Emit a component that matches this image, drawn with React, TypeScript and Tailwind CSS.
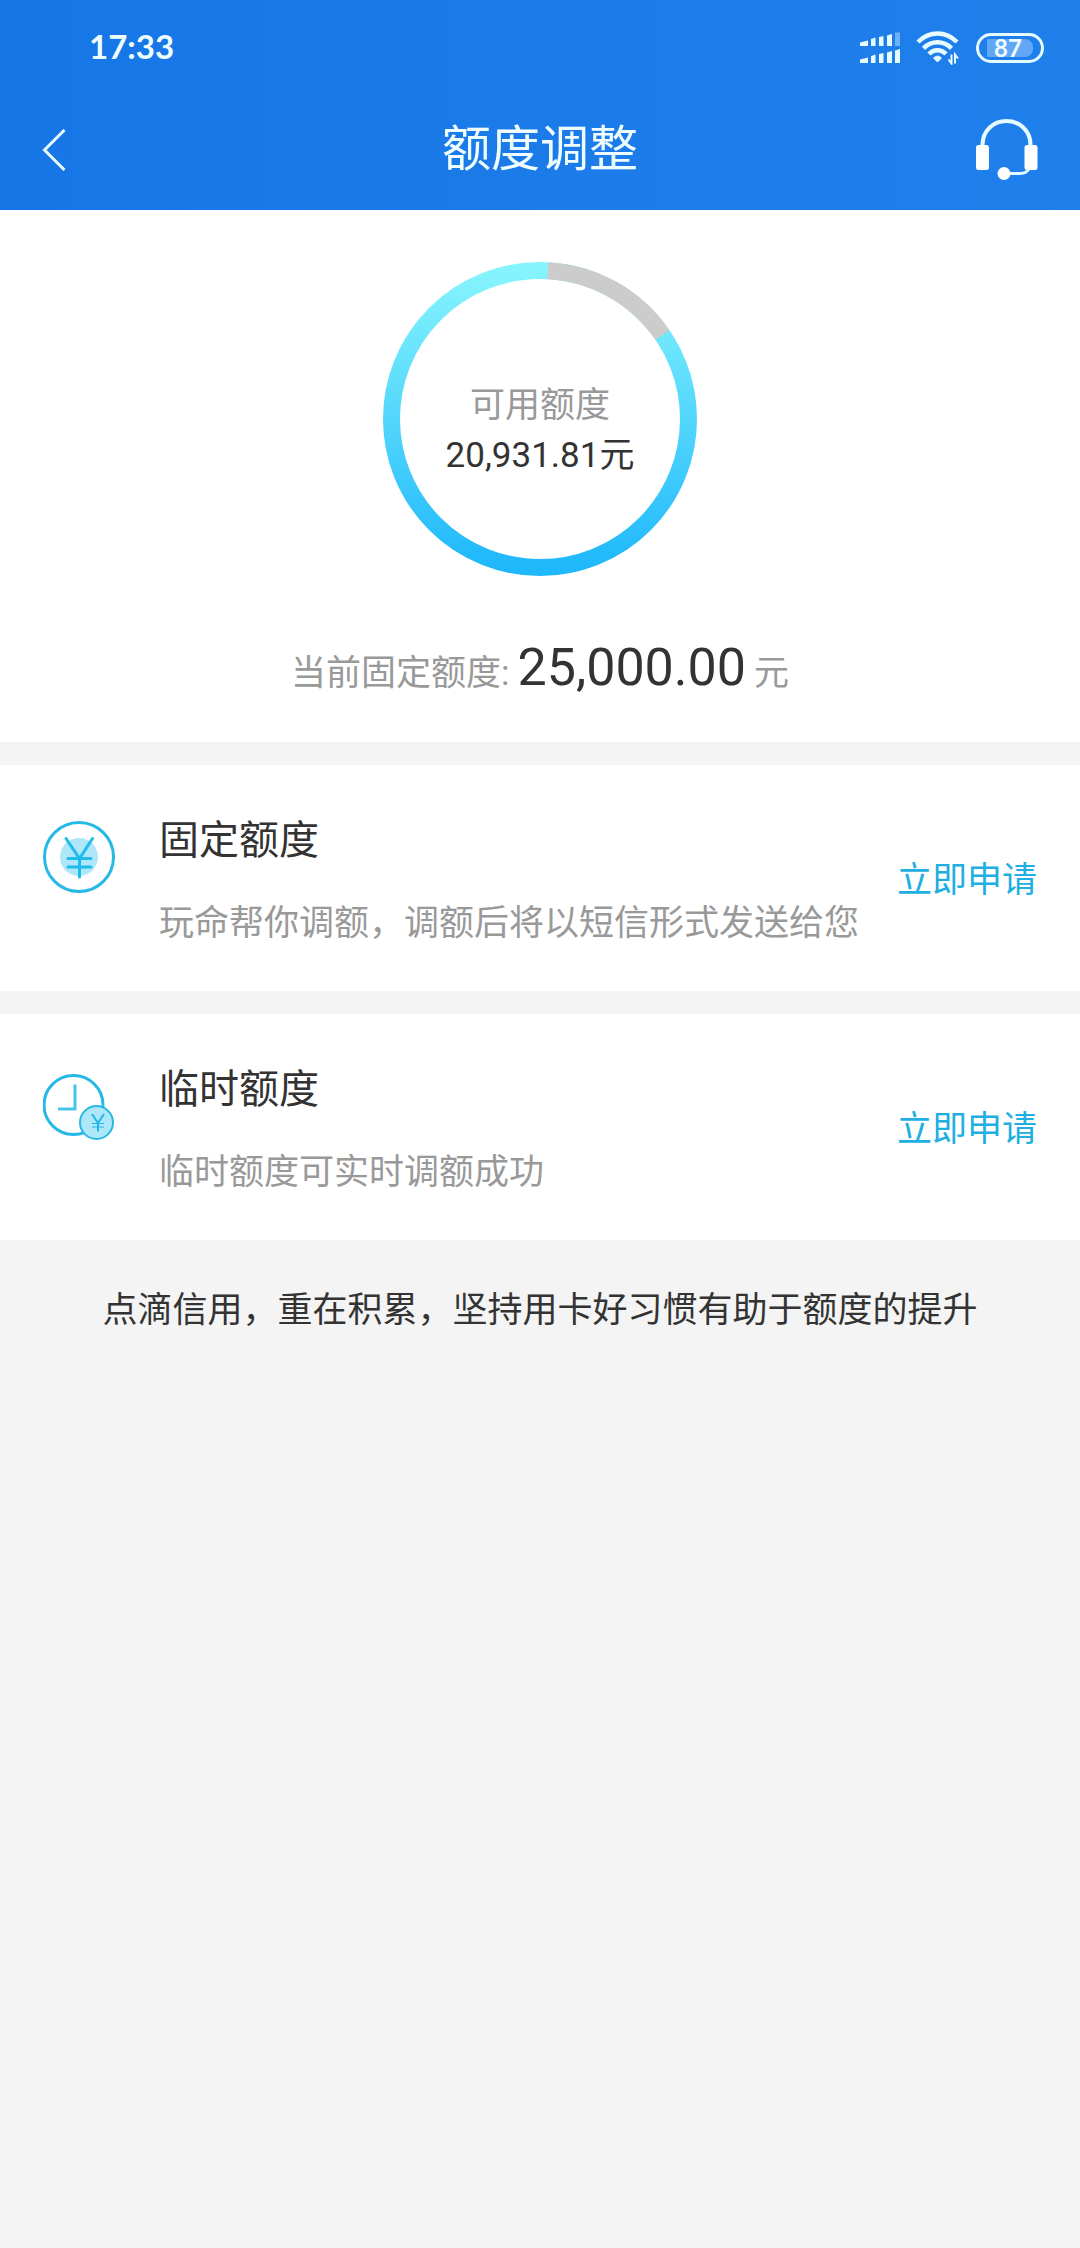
import React from 'react';

const SignalIcon = () => (
  <svg width="40" height="32" viewBox="0 0 40 32" fill="#e6fbff" aria-hidden="true">
    <path d="M0 10.5 8 8.5V14H0Z" />
    <path d="M11 7 15.5 5.5V14H11Z" />
    <path d="M19 5 23.5 4V14H19Z" />
    <path d="M27 3.5 32 2V14H27Z" />
    <path d="M35 0.5H40V14H35Z" fill="#6fb1f8" />
    <path d="M0 27.5 8 25.5V31H0Z" />
    <path d="M11 24 15.5 22.5V31H11Z" />
    <path d="M19 22 23.5 21V31H19Z" />
    <path d="M27 20.5 32 19V31H27Z" />
    <path d="M35 18.5 40 17V31H35Z" />
  </svg>
);

const WifiIcon = () => (
  <svg width="44" height="34" viewBox="0 0 44 34" fill="none" stroke="#e6fbff" strokeWidth="4.5" aria-hidden="true">
    <path d="M2 11C13.5 -0.2 29.5 -0.2 41 11" />
    <path d="M7.5 17.3C15.5 9.3 27.5 9.3 35.5 17.3" />
    <path d="M13 23C18 18 25 18 30 23" />
    <path d="M17.5 27C19.5 24.5 23.5 24.5 25.5 27L21.5 31Z" fill="#e6fbff" strokeWidth="1" />
    <path d="M35.5 23.5V32.5L32.5 28.5M39 32.5V23.5L42 27.5" strokeWidth="2" />
  </svg>
);

const HeadsetIcon = () => (
  <svg width="62" height="62" viewBox="0 0 62 62" fill="none" aria-hidden="true">
    <path d="M6.5 28V26C6.5 12 17 2 30.5 2S54.5 12 54.5 26V28" stroke="#e6fbff" strokeWidth="4" />
    <rect x="0" y="26" width="13" height="25" rx="2.5" fill="#fff" />
    <rect x="48.5" y="26" width="13" height="25" rx="2.5" fill="#fff" />
    <path d="M53 50C51 53 48 54.5 44 54.5H30" stroke="#e6fbff" strokeWidth="3" />
    <circle cx="28" cy="54.5" r="6.5" fill="#fff" />
  </svg>
);

const FixedIcon = () => (
  <svg width="72" height="72" viewBox="0 0 72 72" fill="none" stroke="#27b9e6" strokeWidth="3" aria-hidden="true">
    <circle cx="36" cy="36" r="34.5" />
    <circle cx="36" cy="36" r="19" fill="#aee6fa" stroke="none" />
    <g stroke="#1fbbea" strokeLinecap="round">
      <path d="M23 17.5 36.5 37.5 49.5 17.5" />
      <path d="M36.5 37.5V56" />
      <path d="M25 37.5H48M25 46H48" />
    </g>
  </svg>
);

const TemporaryIcon = () => (
  <svg width="72" height="72" viewBox="0 0 72 72" fill="none" stroke="#27b9e6" strokeWidth="3" aria-hidden="true">
    <circle cx="30.5" cy="35" r="29.5" />
    <path d="M32 14.5V39H15" stroke="#45c6e8" />
    <circle cx="53.5" cy="52.5" r="16.5" fill="#aee6fa" strokeWidth="2" />
    <g stroke="#1fb6e6" strokeWidth="2">
      <path d="M49 44 55 53 61 44" />
      <path d="M55 53V61.5" />
      <path d="M49 53.5H61M49 57H61" strokeWidth="1" />
    </g>
  </svg>
);

// Full gradient circle with the used part laid over it in grey
const QuotaRing = ({ usedPercent }: { usedPercent: number }) => (
  <svg className="absolute inset-0 size-full" viewBox="0 0 314 314" fill="none" strokeWidth="17" aria-hidden="true">
    <defs>
      <linearGradient id="ring" x1="0" y1="0" x2="0" y2="1">
        <stop offset="0" stopColor="#86f4fd" />
        <stop offset="1" stopColor="#1fb8fb" />
      </linearGradient>
    </defs>
    <circle cx="157" cy="157" r="148.5" stroke="url(#ring)" />
    <circle
      cx="157"
      cy="157"
      r="148.5"
      stroke="#ccc"
      pathLength="100"
      strokeDasharray={`${usedPercent} 100`}
      transform="rotate(-87 157 157)"
    />
  </svg>
);

interface QuotaRowProps {
  icon: React.ReactNode;
  title: string;
  description: string;
}

const QuotaRow = ({ icon, title, description }: QuotaRowProps) => (
  <section className="flex items-center bg-white pt-12 pb-[42px] px-[43px]">
    <div className="mt-2 mr-11 shrink-0 self-start">{icon}</div>
    <div className="flex-1">
      <h2 className="text-[40px] leading-[56px] text-[#333]">{title}</h2>
      <p className="mt-[30px] text-[35px] leading-[50px] text-[#999]">{description}</p>
    </div>
    <button type="button" className="shrink-0 text-[35px] leading-[50px] text-[#20afe0]">
      立即申请
    </button>
  </section>
);

export default function App() {
  return (
    <div className="min-h-screen bg-[#f4f4f4] font-[Roboto,'Noto_Sans_CJK_SC',sans-serif]">
      <header className="bg-linear-to-r from-[#1776e6] to-[#1f80ec] text-[#effdff]">
        <div className="flex h-24 items-center justify-between pr-9 pl-[89px]">
          <span className="pb-0.5 font-[Lato,sans-serif] text-[33px] font-bold">17:33</span>
          <div className="flex items-center">
            <SignalIcon />
            <div className="mr-4 ml-4">
              <WifiIcon />
            </div>
            <div className="flex h-[30px] w-[68px] items-center rounded-full border-3 border-[#e6fbff] px-2">
              <span className="flex h-[18px] w-full items-center justify-center rounded-r-lg bg-[#62a8f7] pr-1 font-[Lato,sans-serif] text-[24px] leading-none font-bold">
                87
              </span>
            </div>
          </div>
        </div>
        <div className="flex h-[114px] items-center justify-between px-[42px] pb-1.5">
          <button type="button" aria-label="返回" className="flex w-[62px]">
            <svg width="24" height="42" viewBox="0 0 24 42" fill="none" stroke="#e6fbff" strokeWidth="3">
              <path d="M22.5 1 2.5 21 22.5 41" />
            </svg>
          </button>
          <h1 className="text-[49px] leading-[64px]">额度调整</h1>
          <button type="button" aria-label="客服">
            <HeadsetIcon />
          </button>
        </div>
      </header>

      <section className="flex flex-col items-center bg-white pt-[52px] pb-8">
        <div className="relative flex size-[314px] flex-col items-center justify-center pt-6">
          <QuotaRing usedPercent={14.6} />
          <p className="text-[35px] leading-[50px] text-[#999]">可用额度</p>
          <p className="text-[35px] leading-[50px] text-[#333]">20,931.81元</p>
        </div>
        <p className="mt-14 flex items-baseline gap-2 text-[35px] leading-[72px] text-[#999]">
          <span>当前固定额度:</span>
          <span className="text-[52px] text-[#333]">25,000.00</span>
          <span>元</span>
        </p>
      </section>

      <main className="mt-[23px] flex flex-col gap-[23px]">
        <QuotaRow
          icon={<FixedIcon />}
          title="固定额度"
          description="玩命帮你调额，调额后将以短信形式发送给您"
        />
        <QuotaRow
          icon={<TemporaryIcon />}
          title="临时额度"
          description="临时额度可实时调额成功"
        />
      </main>

      <p className="mt-[46px] text-center text-[35px] leading-[50px] text-[#333]">
        点滴信用，重在积累，坚持用卡好习惯有助于额度的提升
      </p>
    </div>
  );
}
